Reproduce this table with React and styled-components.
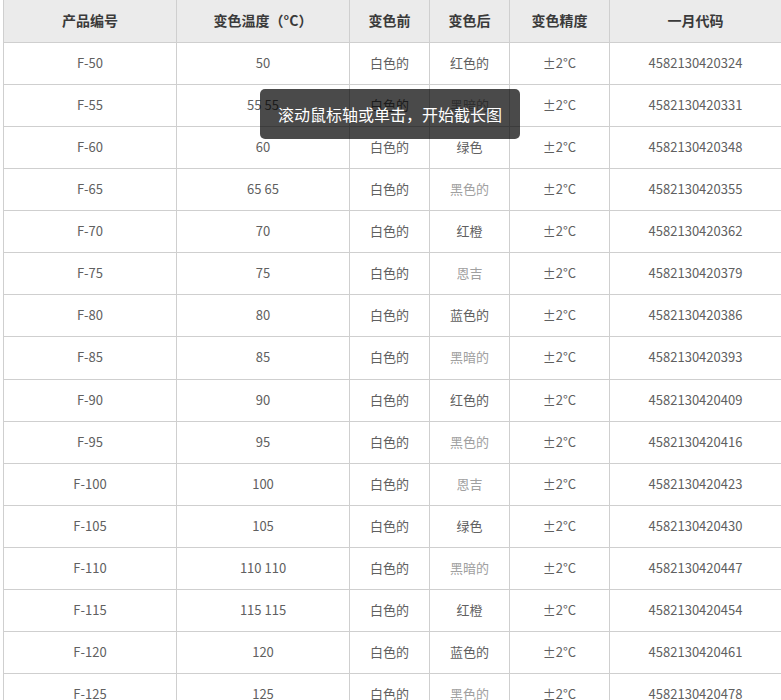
import React from "react";
import styled, { createGlobalStyle } from "styled-components";

const Global = createGlobalStyle`
  html, body { margin: 0; padding: 0; background: #fff; }
  body { font-family: "Noto Sans CJK SC", "Noto Sans", sans-serif; }
`;

const Page = styled.div`
  position: relative;
  padding-left: 3px;
  margin-top: -1px;
`;

const Table = styled.table`
  border-collapse: collapse;
  table-layout: fixed;
  width: 778px;
`;

const HeadCell = styled.th`
  height: 40px;
  padding: 0 0 2px;
  background: #ebebeb;
  border: 1px solid #cfcfcf;
  color: #3a3a3a;
  font-size: 14px;
  font-weight: bold;
  text-align: center;
  vertical-align: middle;
`;

const Cell = styled.td`
  height: 39.07px;
  padding: 0 0 2px;
  border: 1px solid #cfcfcf;
  color: ${(p) => (p.$light ? "#a0a0a0" : "#606060")};
  font-size: 13px;
  text-align: center;
  vertical-align: middle;
  white-space: nowrap;
`;

const Toast = styled.div`
  position: absolute;
  left: 260px;
  top: 90px;
  width: 260px;
  height: 50px;
  border-radius: 5px;
  background: rgba(0, 0, 0, 0.71);
  color: #fff;
  font-size: 16px;
  display: flex;
  align-items: center;
  justify-content: center;
`;

const cols = [173, 173, 80, 80, 100, 172];
const headers = ["产品编号", "变色温度（°C）", "变色前", "变色后", "变色精度", "一月代码"];

const rows = [
  ["F-50", "50", "红色的", false, "4582130420324"],
  ["F-55", "55 55", "黑暗的", true, "4582130420331"],
  ["F-60", "60", "绿色", false, "4582130420348"],
  ["F-65", "65 65", "黑色的", true, "4582130420355"],
  ["F-70", "70", "红橙", false, "4582130420362"],
  ["F-75", "75", "恩吉", true, "4582130420379"],
  ["F-80", "80", "蓝色的", false, "4582130420386"],
  ["F-85", "85", "黑暗的", true, "4582130420393"],
  ["F-90", "90", "红色的", false, "4582130420409"],
  ["F-95", "95", "黑色的", true, "4582130420416"],
  ["F-100", "100", "恩吉", true, "4582130420423"],
  ["F-105", "105", "绿色", false, "4582130420430"],
  ["F-110", "110 110", "黑暗的", true, "4582130420447"],
  ["F-115", "115 115", "红橙", false, "4582130420454"],
  ["F-120", "120", "蓝色的", false, "4582130420461"],
  ["F-125", "125", "黑色的", true, "4582130420478"],
];

export default function App() {
  return (
    <Page>
      <Global />
      <Table>
        <colgroup>
          {cols.map((w, i) => (
            <col key={i} style={{ width: w }} />
          ))}
        </colgroup>
        <thead>
          <tr>
            {headers.map((h) => (
              <HeadCell key={h}>{h}</HeadCell>
            ))}
          </tr>
        </thead>
        <tbody>
          {rows.map(([id, temp, after, light, code]) => (
            <tr key={id}>
              <Cell>{id}</Cell>
              <Cell>{temp}</Cell>
              <Cell>白色的</Cell>
              <Cell $light={light}>{after}</Cell>
              <Cell>±2°C</Cell>
              <Cell>{code}</Cell>
            </tr>
          ))}
        </tbody>
      </Table>
      <Toast>滚动鼠标轴或单击，开始截长图</Toast>
    </Page>
  );
}
